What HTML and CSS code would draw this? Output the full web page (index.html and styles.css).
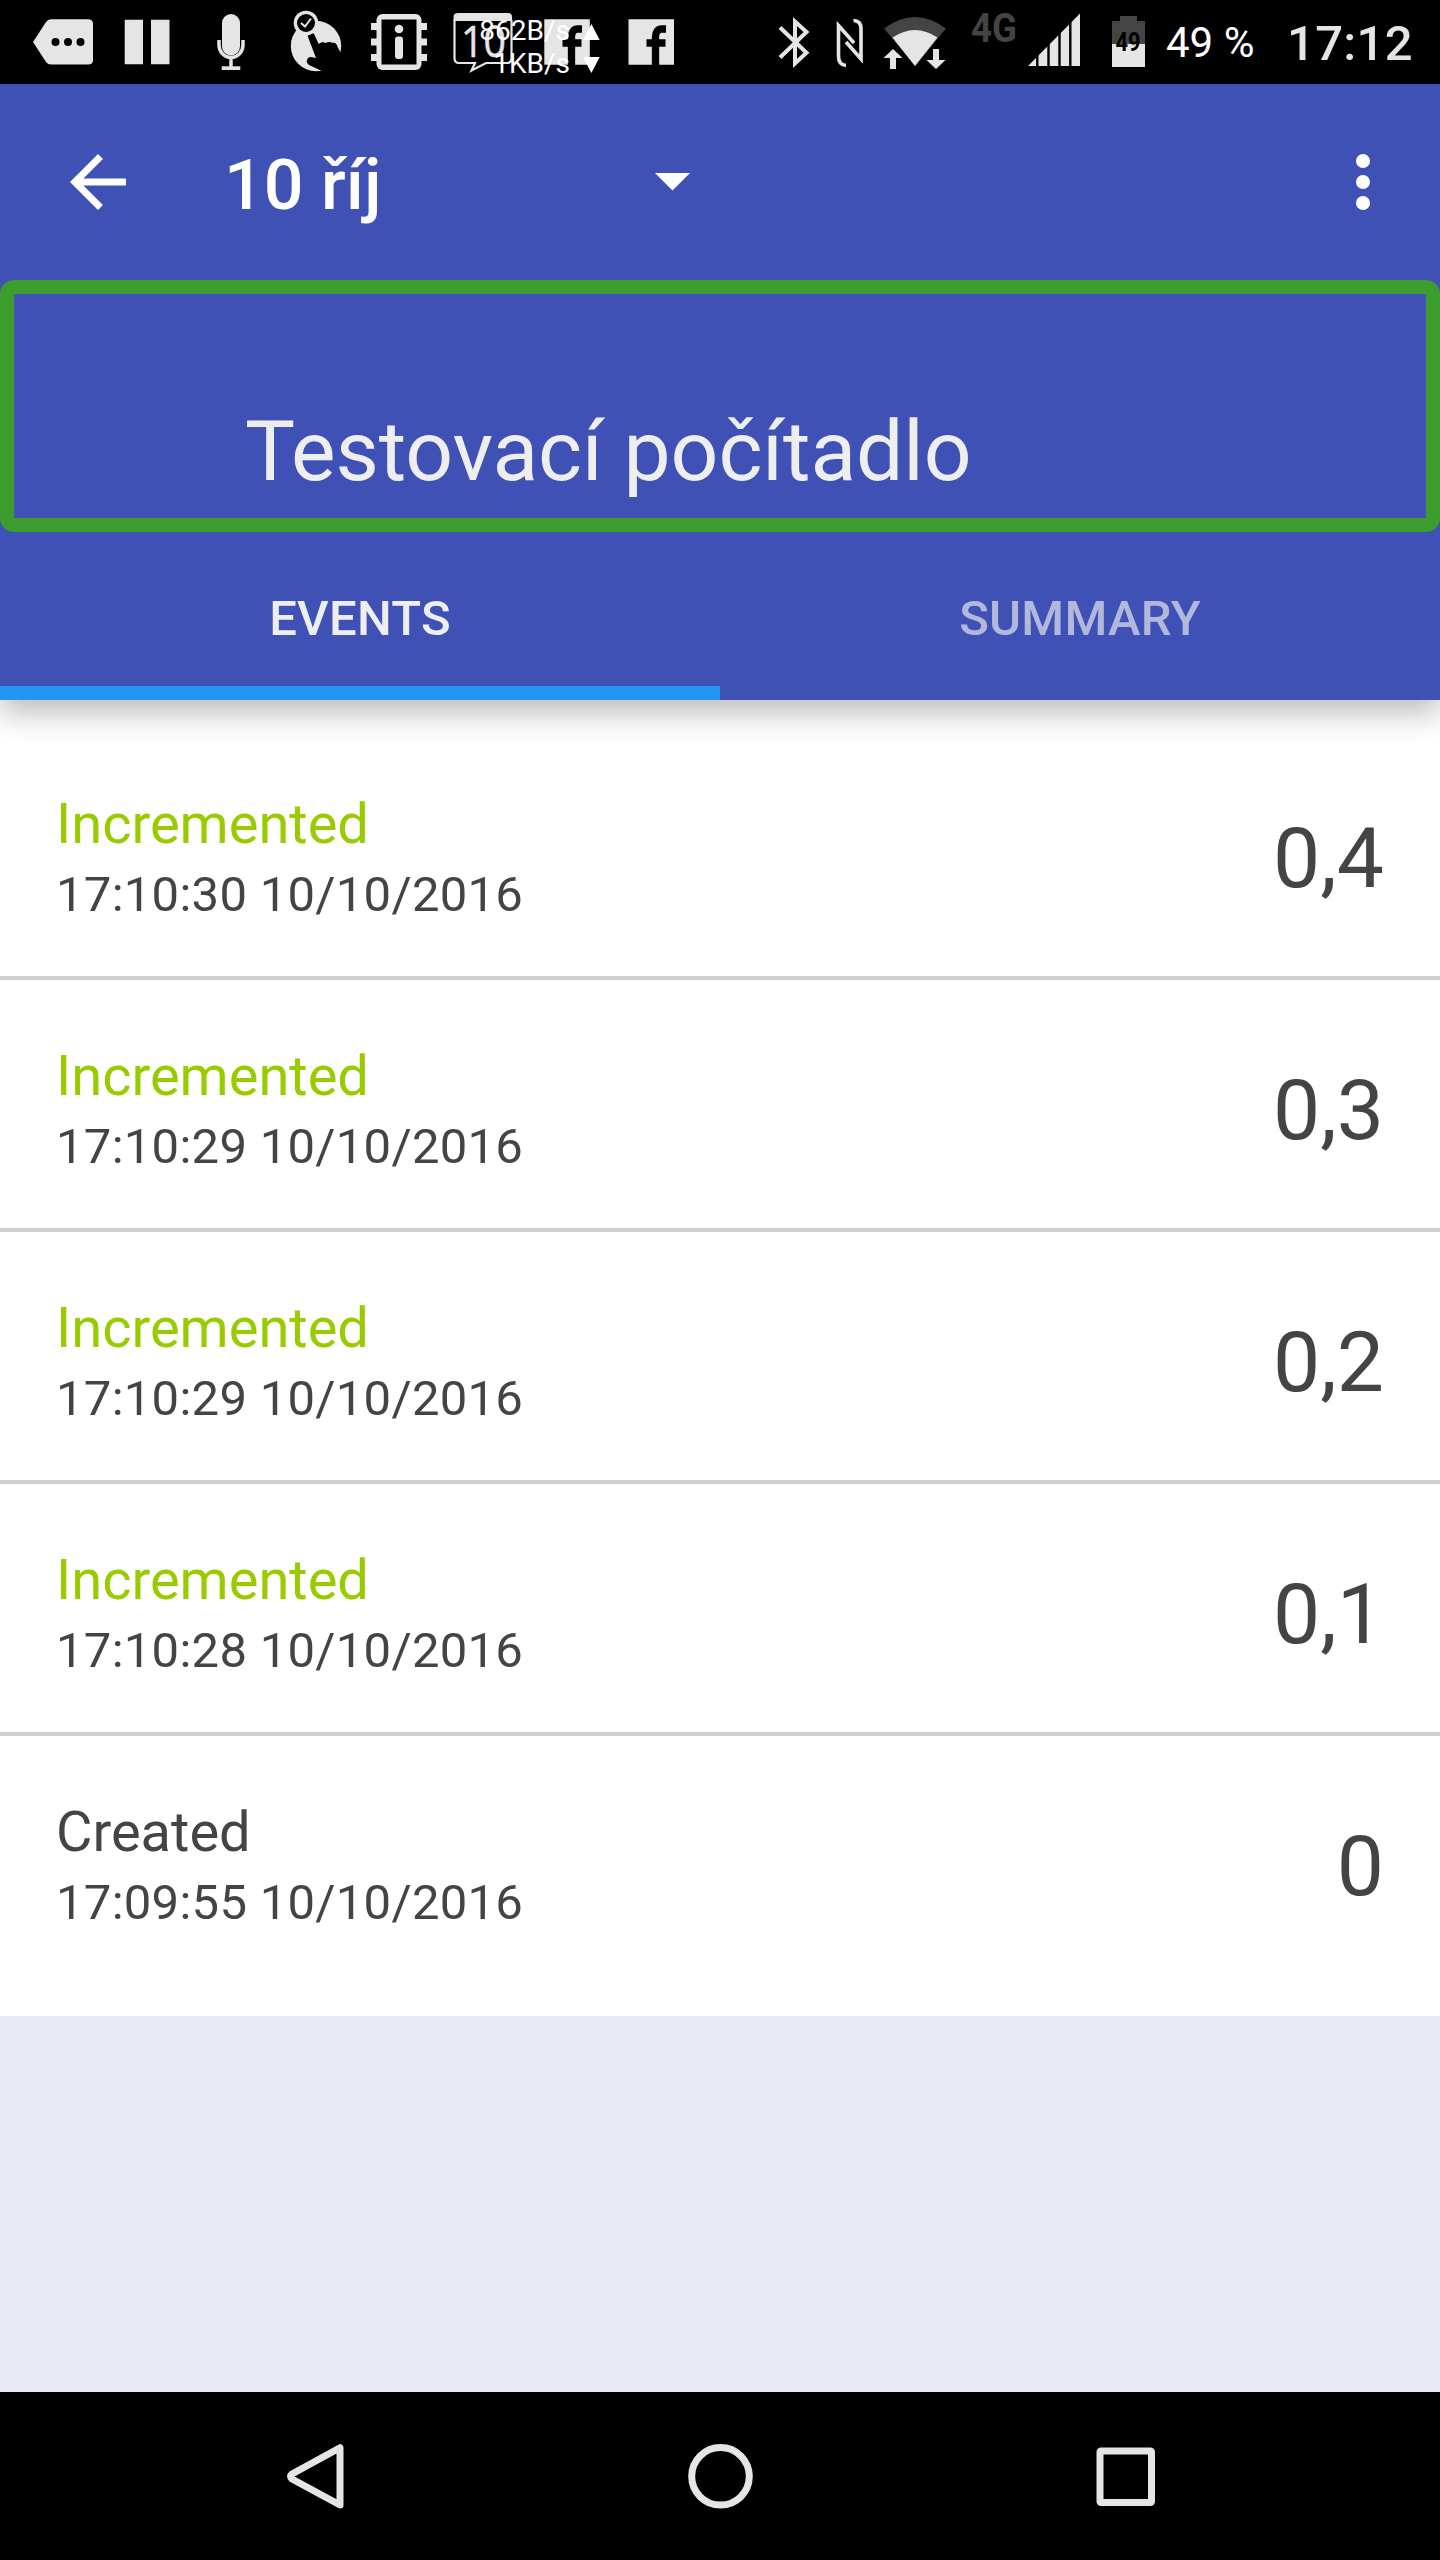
FILE: index.html
```html
<!DOCTYPE html>
<html lang="cs">
<head>
<meta charset="utf-8">
<title>Testovací počítadlo</title>
<link rel="stylesheet" href="styles.css">
</head>
<body>
<div class="screen">
  <header class="status">
    <svg width="110" height="84" viewBox="0 0 110 84"><path d="M33 42L46 22Q48 19.3 51 19.3H88Q93 19.3 93 24V60Q93 64.6 88 64.6H51Q48 64.6 46 62Z"/><g class="k"><circle cx="55.5" cy="42" r="4"/><circle cx="68" cy="42" r="4"/><circle cx="80.5" cy="42" r="4"/></g></svg>
    <svg width="80" height="84" viewBox="110 0 80 84"><path d="M124.7 19.7H143V64.3H124.7ZM151 19.7H169.5V64.3H151Z"/></svg>
    <svg width="80" height="84" viewBox="190 0 80 84"><rect x="222" y="14" width="18" height="41.500" rx="9"/><path class="line" stroke-width="3.500" d="M219 40V45A12 12.500 0 0 0 243 45V40M231 57V67"/><path d="M221.700 66.300H240.300V70H221.700Z"/></svg>
    <svg width="85" height="84" viewBox="270 0 85 84"><circle cx="316" cy="46" r="25.200"/><path class="k" d="M308 37C307 32 313.500 31 315 36L318.700 44C321 42 324 42 325.500 43C328 41.500 331 41.500 332.500 43C335 42 337 44 337.500 47L341 53L352 53V75H328L322 71L309 65C305 62 307 57 311 57L316 58Z"/><circle cx="306" cy="23" r="12.300"/><circle class="k" cx="306" cy="23" r="9"/><path class="line" stroke-width="2" d="M301 23L305 26.500L311 18.500"/></svg>
    <svg width="85" height="84" viewBox="355 0 85 84"><path d="M371 23H427V30H371ZM371 38.500H427V45.500H371ZM371 54H427V61H371Z"/><rect x="376.500" y="14" width="45" height="56" rx="6"/><path class="k" d="M381.500 19.500H416.500V64.500H381.500Z"/><circle cx="399" cy="29" r="4.300"/><rect x="395" y="36.500" width="8" height="22.500" rx="3"/></svg>
    <svg width="90" height="84" viewBox="440 0 90 84"><path d="M453.500 21V17Q453.500 13 458 13H508Q512 13 512 17V21Z"/><path class="line" stroke-width="2.200" d="M454.500 20V58Q454.500 63 459 63H475L471.500 70.500L486 63H507Q511.500 63 511.500 58V20"/><text class="day" x="461" y="57" font-size="43" textLength="45" lengthAdjust="spacingAndGlyphs">10</text></svg>
    <svg width="75" height="84" viewBox="530 0 75 84"><path d="M544.300 19.300H589.800V64.700H544.300Z"/><path class="cut" stroke-width="7.300" d="M571.500 65V37Q571.500 29 578 29H582M562.500 43H581.500"/></svg>
    <svg width="85" height="84" viewBox="605 0 85 84"><path d="M628.500 19.300H674V64.700H628.500Z"/><path class="cut" stroke-width="7.300" d="M655.500 65V37Q655.500 29 662 29H666M646.500 43H665.500"/></svg>
    <div class="speed"><span>862B/s</span><span>1KB/s</span><svg width="17" height="84" viewBox="583.300 0 17 84"><path class="w" d="M583.300 40L591.700 24L600 40ZM583.300 57H600L591.700 73Z"/></svg></div>
    <svg class="push" width="65" height="84" viewBox="760 0 65 84"><path class="line" stroke-width="4" d="M780 27.500L806.500 52.700L795 63.500V21.500L806.500 32L780 57.500"/></svg>
    <svg width="50" height="84" viewBox="825 0 50 84"><path class="line" stroke-width="3.600" d="M846 65.500Q838.500 65 838.500 56V25.500L854 43M853.500 20.500Q861 20.500 861 29V59L846 42"/></svg>
    <svg width="85" height="84" viewBox="875 0 85 84"><path class="dim" d="M915 66L884 28.500Q915 5.500 946 28.500Z"/><path d="M915 66L892.500 37.500Q915 22.500 937.500 37.500Z"/><path stroke="#000" stroke-width="4" paint-order="stroke" d="M890 69V58H883.500L893 49L902.500 58H896V69ZM933 49V60H926.500L936 69L945.500 60H939V49Z"/></svg>
    <svg width="60" height="84" viewBox="960 0 60 84"><text class="dim bold" x="971" y="42" font-size="41" textLength="46" lengthAdjust="spacingAndGlyphs">4G</text></svg>
    <svg width="80" height="84" viewBox="1020 0 80 84"><path d="M1028 66L1080 13.500V66Z"/><path class="cut" stroke-width="2.400" d="M1037.300 10V68M1048.500 10V68M1059.500 10V68M1070.300 10V68"/></svg>
    <svg width="66" height="84" viewBox="1100 0 66 84"><path class="dim" d="M1112 21H1120V16H1137V21H1145V44H1112Z"/><path d="M1112 44H1145V67H1112Z"/><text class="k bold" x="1115.500" y="51" font-size="25" textLength="25" lengthAdjust="spacingAndGlyphs">49</text></svg>
    <span class="pct">49 %</span>
    <span class="clock">17:12</span>
  </header>
  <section class="appbar">
    <div class="toolbar">
      <svg class="icon" viewBox="0 0 24 24"><path d="M20 11H7.830l5.590-5.590L12 4l-8 8 8 8 1.410-1.410L7.830 13H20z"/></svg>
      <div class="spinner"><span>10 říj</span><svg width="35" height="18" viewBox="0 0 35 18"><path d="M0 0H35L17.500 17.500Z"/></svg></div>
      <svg class="icon" viewBox="0 0 24 24"><circle cx="12" cy="6" r="2"/><circle cx="12" cy="12" r="2"/><circle cx="12" cy="18" r="2"/></svg>
    </div>
    <h1 class="name">Testovací počítadlo</h1>
    <nav class="tabs"><div class="tab active">EVENTS</div><div class="tab">SUMMARY</div></nav>
  </section>
  <main class="list">
    <div class="row"><div class="info"><div class="kind up">Incremented</div><div class="when">17:10:30 10/10/2016</div></div><div class="value">0,4</div></div>
    <div class="row"><div class="info"><div class="kind up">Incremented</div><div class="when">17:10:29 10/10/2016</div></div><div class="value">0,3</div></div>
    <div class="row"><div class="info"><div class="kind up">Incremented</div><div class="when">17:10:29 10/10/2016</div></div><div class="value">0,2</div></div>
    <div class="row"><div class="info"><div class="kind up">Incremented</div><div class="when">17:10:28 10/10/2016</div></div><div class="value">0,1</div></div>
    <div class="row"><div class="info"><div class="kind">Created</div><div class="when">17:09:55 10/10/2016</div></div><div class="value">0</div></div>
  </main>
  <footer class="navbar">
    <svg width="70" height="70" viewBox="280.500 2441 70 70"><path d="M340.500 2447.700V2505L292.500 2479Q289.500 2476.500 292.500 2474Z"/></svg>
    <svg width="70" height="70" viewBox="684.500 2441 70 70"><circle cx="720" cy="2476.300" r="28.800"/></svg>
    <svg width="70" height="70" viewBox="1090 2441 70 70"><rect x="1100" y="2451" width="51.500" height="51.500" rx="1"/></svg>
  </footer>
</div>
</body>
</html>
```
FILE: styles.css
```css
* { box-sizing: border-box; }
body { margin: 0; font-family: Roboto, sans-serif; }
.screen { width: 1440px; height: 2560px; display: flex; flex-direction: column; background: #e8eaf6; color: #444; overflow: hidden; }
svg { display: block; flex: none; overflow: visible; }

.status { position: relative; flex: none; display: flex; height: 84px; background: #000; color: #fff; white-space: nowrap; }
.status svg { fill: #e5e5e5; }
.status .k { fill: #000; }
.status .w { fill: #fff; }
.status .dim { fill: #444; }
.status .line { fill: none; stroke: #e5e5e5; }
.status .cut { fill: none; stroke: #000; }
.bold { font-weight: 700; }
.day { font-family: "Open Sans", sans-serif; stroke: #e5e5e5; stroke-width: .5px; }
.push { margin-left: 70px; }
.speed { position: absolute; left: 430px; top: 14px; width: 140px; display: flex; flex-direction: column; align-items: flex-end; font-size: 28px; line-height: 33px; }
.speed svg { position: absolute; left: 153px; top: -14px; }
.pct { width: 121px; font-size: 42px; line-height: 86px; }
.clock { font-size: 49px; line-height: 87px; font-weight: 500; letter-spacing: .3px; color: #e5e5e5; }

.appbar { position: relative; flex: none; background: #3f51b5; box-shadow: 0 14px 28px rgba(0,0,0,.25); }
.toolbar { display: flex; align-items: center; height: 196px; padding: 0 35px 0 56px; color: #fff; fill: #fff; }
.icon { width: 84px; height: 84px; }
.spinner { display: flex; align-items: center; justify-content: space-between; width: 466px; margin: 0 auto 0 84px; font-size: 70px; line-height: 82px; font-weight: 500; }
.spinner span { padding-top: 5px; }
.name { height: 252px; margin: 0; padding: 109px 0 0 231px; border: 14px solid #3c9c2e; border-radius: 14px; font-size: 84px; line-height: 98px; letter-spacing: -.08px; font-weight: 400; color: #eee; white-space: nowrap; }
.tabs { display: flex; height: 168px; }
.tab { flex: 1; padding-top: 17px; border-bottom: 14px solid transparent; text-align: center; font-size: 49px; line-height: 140px; letter-spacing: .25px; font-weight: 500; color: rgba(238,238,238,.66); }
.tab.active { color: #eee; border-color: #2196f3; }

.list { flex: none; padding: 28px 0; background: #fff; }
.row { display: flex; align-items: center; justify-content: space-between; height: 252px; padding: 14px 56px 0; border-bottom: 4px solid #cecece; }
.row:last-child { border-color: transparent; }
.info { margin-top: 6px; }
.kind { font-size: 56px; line-height: 66px; }
.up { color: #99cc00; }
.when { font-size: 49px; line-height: 76px; letter-spacing: .28px; }
.value { font-size: 84px; line-height: 98px; }

.navbar { display: flex; justify-content: center; align-items: center; gap: 335px; height: 168px; margin-top: auto; background: #000; }
.navbar svg { fill: none; stroke: #e5e5e5; stroke-width: 7; stroke-linejoin: round; }
```
